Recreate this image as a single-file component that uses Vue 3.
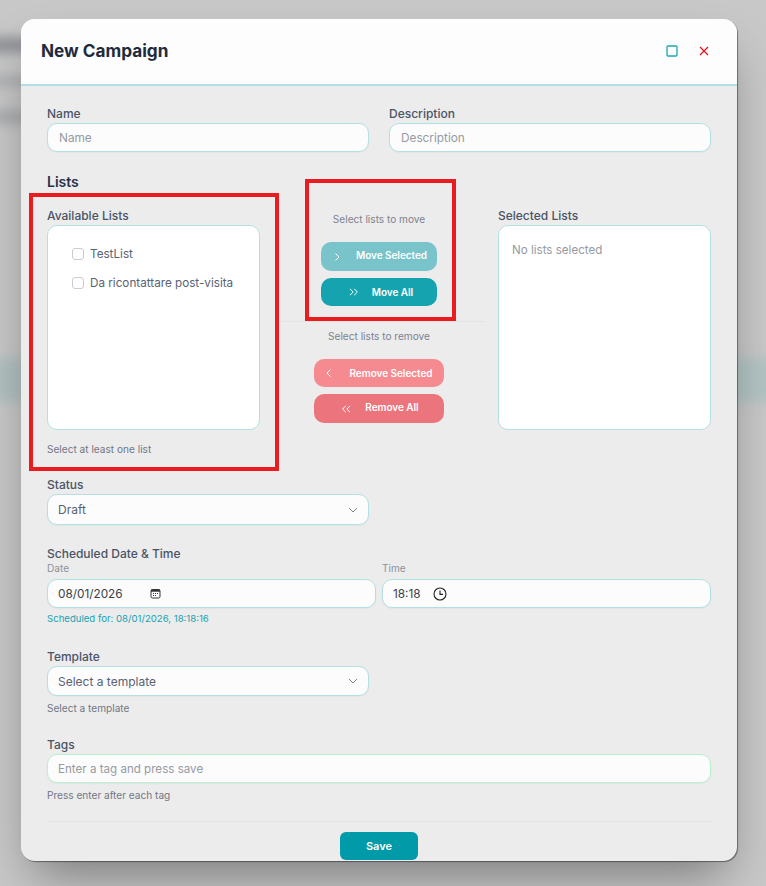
<script setup>
const avail = ['TestList', 'Da ricontattare post-visita']
</script>

<template>
  <div class="page">
    <div class="backdrop">
      <span class="blur b1"></span>
      <span class="blur b2"></span>
      <span class="blur b5"></span>
      <span class="blur b3"></span>
      <span class="blur b4"></span>
    </div>
    <div class="modal">
      <header class="head">
        <h1>New Campaign</h1>
        <div class="win">
          <svg width="12" height="12" viewBox="0 0 12 12"><rect x="1" y="1" width="10" height="10" rx="1" fill="none" stroke="#1ea5b3" stroke-width="1.3"/></svg>
          <svg width="10" height="10" viewBox="0 0 10 10"><path d="M1 1l8 8M9 1l-8 8" stroke="#e8101c" stroke-width="1.2" fill="none"/></svg>
        </div>
      </header>
      <div class="body">
        <div class="two">
          <div class="field">
            <label>Name</label>
            <div class="input ph">Name</div>
          </div>
          <div class="field">
            <label>Description</label>
            <div class="input ph">Description</div>
          </div>
        </div>

        <h2>Lists</h2>

        <div class="lists">
          <div class="col">
            <label>Available Lists</label>
            <div class="box checks">
              <div v-for="a in avail" :key="a" class="check"><i></i><span>{{ a }}</span></div>
            </div>
            <p class="hint first">Select at least one list</p>
          </div>
          <div class="mid">
            <p class="midtext top">Select lists to move</p>
            <button class="btn teal1 w116"><svg width="8" height="10" viewBox="0 0 8 10"><path d="M2.5 1.5L6 5 2.5 8.5" fill="none" stroke="#fff" stroke-width="1"/></svg><span class="lift">Move Selected</span></button>
            <button class="btn teal2 w116 all short"><svg width="10" height="10" viewBox="0 0 10 10"><path d="M1 1.8L4.2 5 1 8.2M5.2 1.8L8.4 5 5.2 8.2" fill="none" stroke="#fff" stroke-width="1"/></svg><span>Move All</span></button>
            <div class="sep"></div>
            <p class="midtext">Select lists to remove</p>
            <button class="btn red1 w130 short"><svg width="8" height="10" viewBox="0 0 8 10"><path d="M5.5 1.5L2 5l3.5 3.5" fill="none" stroke="#fff" stroke-width="1"/></svg><span>Remove Selected</span></button>
            <button class="btn red2 w130 all"><svg width="10" height="10" viewBox="0 0 10 10"><path d="M4.8 1.8L1.6 5l3.2 3.2M9 1.8L5.8 5 9 8.2" fill="none" stroke="#fff" stroke-width="1"/></svg><span class="lift">Remove All</span></button>
          </div>
          <div class="col">
            <label>Selected Lists</label>
            <div class="box empty">No lists selected</div>
          </div>
        </div>

        <div class="half status">
          <label>Status</label>
          <div class="input sel">
            <span>Draft</span>
            <svg width="10" height="6" viewBox="0 0 10 6"><path d="M1 1l4 4 4-4" fill="none" stroke="#7b8494" stroke-width="1"/></svg>
          </div>
        </div>

        <div class="sched">
          <label>Scheduled Date &amp; Time</label>
          <div class="dt">
            <div class="datecol">
              <small>Date</small>
              <div class="input val">
                <span class="dv">08/01/2026</span>
                <svg width="11" height="11" viewBox="0 0 11 11"><rect x="1" y="1.5" width="9" height="8.5" rx="1.5" fill="none" stroke="#333" stroke-width="1"/><rect x="1" y="1.5" width="9" height="2.2" fill="#333"/><path d="M3 5.5h1M5 5.5h1M7 5.5h1M3 7.5h1M5 7.5h1" stroke="#333" stroke-width="1"/></svg>
              </div>
            </div>
            <div class="timecol">
              <small>Time</small>
              <div class="input val">
                <span class="tv">18:18</span>
                <svg width="14" height="14" viewBox="0 0 14 14"><circle cx="7" cy="7" r="6" fill="none" stroke="#222" stroke-width="1.1"/><path d="M7 3.5V7.4H10" fill="none" stroke="#222" stroke-width="1.1"/></svg>
              </div>
            </div>
          </div>
          <p class="sfor">Scheduled for: 08/01/2026, 18:18:16</p>
        </div>

        <div class="half tmpl">
          <label>Template</label>
          <div class="input sel">
            <span>Select a template</span>
            <svg width="10" height="6" viewBox="0 0 10 6"><path d="M1 1l4 4 4-4" fill="none" stroke="#7b8494" stroke-width="1"/></svg>
          </div>
          <p class="hint under">Select a template</p>
        </div>

        <div class="tags">
          <label>Tags</label>
          <div class="input ph green">Enter a tag and press save</div>
          <p class="hint under">Press enter after each tag</p>
        </div>

        <div class="foot"><button class="save">Save</button></div>
      </div>
    </div>
    <div class="mark m1"></div>
    <div class="mark m2"></div>
  </div>
</template>

<style>
html, body { margin: 0; background: #c8c8c8; }
</style>

<style scoped>
* { box-sizing: border-box; }
.page {
  position: relative;
  width: 766px;
  height: 886px;
  overflow: hidden;
  background: #c8c8c8;
  font-family: Inter, "Open Sans", sans-serif;
  color: #3a4456;
}
.backdrop { position: absolute; inset: 0; }
.blur { position: absolute; filter: blur(6px); }
.b1 { left: -10px; top: 37px; width: 50px; height: 16px; background: #8d9095; }
.b2 { left: -10px; top: 76px; width: 50px; height: 10px; background: #a9abae; }
.b5 { left: -10px; top: 110px; width: 50px; height: 14px; background: #a9abae; }
.b3 { left: -10px; top: 358px; width: 50px; height: 44px; background: #b1c1c0; }
.b4 { left: 720px; top: 358px; width: 60px; height: 44px; background: #b3c3c3; }
.modal {
  position: absolute;
  left: 21px;
  top: 19px;
  width: 716px;
  height: 842px;
  border-radius: 14px;
  overflow: hidden;
  background: #ececec;
  box-shadow: 1px 1px 1px rgba(0,0,0,.42), 0 25px 50px -12px rgba(0,0,0,.4);
}
.head {
  height: 67px;
  padding: 0 28px 3px 20px;
  display: flex;
  align-items: center;
  justify-content: space-between;
  background: #fdfdfd;
  border-bottom: 2px solid #b2e0e4;
}
h1 { margin: 0; font-size: 17.2px; font-weight: 700; color: #1f2b3d; }
.win { display: flex; align-items: center; gap: 21px; margin-top: 2px; }
.body { padding: 20px 26px 0; }
label { display: block; font-size: 12px; font-weight: 500; line-height: 16px; color: #4a5466; }
.two { display: grid; grid-template-columns: 322px 322px; gap: 20px; }
.input {
  height: 29px;
  margin-top: 1px;
  padding: 0 10px;
  display: flex;
  align-items: center;
  border: 1px solid #b2e0e4;
  border-radius: 10px;
  background: #fcfcfc;
  font-size: 11.8px;
  box-shadow: 0 1px 2px rgba(0,0,0,.04);
}
.ph { color: #969aa3; padding-left: 11px; }
.green { border-color: #b6f0d0; padding-left: 10px; font-size: 11.6px; }
h2 { margin: 21px 0 0; font-size: 14px; line-height: 18px; font-weight: 600; color: #27324a; }
.lists { display: grid; grid-template-columns: 213px 238px 213px; margin-top: 17px; height: 269px; }
.box {
  height: 205px;
  margin-top: 1px;
  border: 1px solid #b2e0e4;
  border-radius: 10px;
  background: #fff;
}
.checks { padding: 20px 24px; }
.check { display: flex; align-items: center; gap: 6px; height: 15px; margin-bottom: 14px; font-size: 11.7px; color: #596273; white-space: nowrap; }
.check i { width: 12px; height: 12px; border: 1px solid #c9ccd4; border-radius: 3px; background: #fff; }
.empty { padding: 16px 13px; font-size: 11.6px; line-height: 16px; color: #969aa3; }
.hint { margin: 0; font-size: 10.1px; line-height: 12px; color: #717786; }
.first { margin-top: 13px; }
.under { margin-top: 6px; }
.mid { display: flex; flex-direction: column; align-items: center; }
.midtext { margin: 0; font-size: 10.1px; line-height: 12px; color: #7c8290; }
.top { margin-top: 5px; }
.btn {
  display: flex;
  align-items: center;
  justify-content: flex-start;
  height: 29px;
  border: 0;
  border-radius: 10px;
  color: #fff;
  font-family: inherit;
  font-size: 10px;
  font-weight: 600;
  letter-spacing: -.05px;
}
.w116 { width: 116px; padding-left: 12px; margin-top: 17px; }
.w130 { width: 130px; padding-left: 11px; margin-top: 17px; }
.btn span { flex: 1; text-align: center; padding-left: 11px; }
.btn .lift { padding-bottom: 3px; }
.all { margin-top: 7px; }
.short { height: 28px; }
.teal1 { background: #78c4ca; }
.teal2 { background: #16a3b0; }
.red1 { background: #f58a90; }
.red2 { background: #ec747c; }
.btn.all svg { margin-left: 16px; margin-right: -16px; }
.sep { width: 210px; height: 1px; background: #e3e3e3; margin-top: 15px; }
.sep + .midtext { margin-top: 8px; }
.half { width: 322px; }
.sel { justify-content: space-between; height: 31px; color: #596273; padding-right: 10px; font-size: 12px; }
.sched { margin-top: 21px; }
.dt { display: grid; grid-template-columns: 329px 329px; gap: 6px; }
small { display: block; margin-top: 1px; font-size: 10.1px; line-height: 11px; color: #8e929c; }
.dv { width: 92px; color: #3a3f49; }
.tv { width: 40px; color: #3a3f49; }
.val { height: 29px; margin-top: 5px; }
.sfor { margin: 5px 0 0; font-size: 9.6px; line-height: 12px; color: #15a3b0; }
.tmpl { margin-top: 24px; }
.tmpl .sel { height: 30px; }
.tags { margin-top: 23px; }
.foot { margin-top: 20px; border-top: 1px solid #e3e3e3; padding-top: 10px; display: flex; justify-content: center; }
.save {
  width: 78px;
  height: 28px;
  border: 0;
  border-radius: 6px;
  background: #009aa9;
  color: #fff;
  font-family: inherit;
  font-size: 11px;
  font-weight: 600;
}
.mark { position: absolute; border: 4px solid #ea1c20; }
.m1 { left: 29px; top: 193px; width: 250px; height: 278px; }
.m2 { left: 305px; top: 179px; width: 151px; height: 142px; }
</style>
